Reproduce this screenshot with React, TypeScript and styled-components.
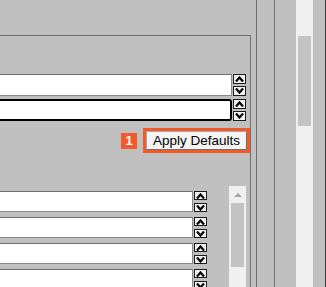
import React from 'react'
import styled, { createGlobalStyle } from 'styled-components'

const GlobalStyle = createGlobalStyle`
  html, body {
    margin: 0;
    padding: 0;
    background: #c0c0c0;
    overflow: hidden;
  }
`

/*
 * STYLES
 */

const Screen = styled.div`
  display: flex;
  width: 326px;
  height: 287px;
  background: #c0c0c0;
  font-family: 'Liberation Sans', Arial, sans-serif;
`

const Main = styled.div`
  width: 251px;
  display: flex;
  flex-direction: column;
`

const Panel = styled.div`
  margin-top: 35px;
  flex: 1;
  border-top: 1px solid #6d6d6d;
  border-right: 1px solid #6d6d6d;
  padding-top: 38px;
  display: flex;
  flex-direction: column;
  min-height: 0;
`

const FieldRow = styled.div<{ $h: number; $mt?: number; $mr?: number }>`
  display: flex;
  height: ${(p) => p.$h}px;
  margin-top: ${(p) => p.$mt ?? 0}px;
  margin-right: ${(p) => p.$mr ?? 0}px;
  gap: 1px;
  flex-shrink: 0;
`

const Field = styled.input<{ $focused?: boolean }>`
  flex: 1;
  min-width: 0;
  box-sizing: border-box;
  background: #fff;
  padding: 0;
  outline: none;
  border-left: none;
  border-top: ${(p) => (p.$focused ? '2px solid #000' : '1px solid #6e6e6e')};
  border-bottom: ${(p) => (p.$focused ? '2px solid #000' : '1px solid #8a8a8a')};
  border-right: ${(p) => (p.$focused ? '2px solid #000' : '1px solid #8a8a8a')};
  border-radius: ${(p) => (p.$focused ? '0 3px 3px 0' : '0')};
`

const Spinner = styled.div`
  width: 13px;
  display: flex;
  flex-direction: column;
  justify-content: space-between;
`

const SpinButton = styled.div<{ $h: number }>`
  box-sizing: border-box;
  height: ${(p) => p.$h}px;
  border: 1px solid #1c1c1c;
  background: #f2f2f2;
  display: flex;
  align-items: center;
  justify-content: center;
`

const ActionRow = styled.div`
  display: flex;
  justify-content: flex-end;
  align-items: center;
  gap: 9px;
  margin-top: 10px;
  margin-right: 3px;
`

const Badge = styled.div`
  width: 16px;
  height: 16px;
  background: #f15a29;
  color: #fff;
  font-size: 13px;
  font-weight: 700;
  display: flex;
  align-items: center;
  justify-content: center;
`

const ActionButton = styled.button`
  box-sizing: border-box;
  width: 101px;
  height: 19px;
  padding: 0 0 1px;
  font-family: 'Liberation Sans', Arial, sans-serif;
  font-size: 13.5px;
  color: #000;
  background: #f4f4f4;
  border: 1px solid #a8a8a8;
  border-right-color: #707070;
  border-bottom-color: #707070;
  outline: 3px solid #f15a29;
  outline-offset: 0;
  white-space: nowrap;
`

const ListArea = styled.div`
  margin-top: 36px;
  flex: 1;
  display: flex;
  padding-right: 4px;
  min-height: 0;
`

const ListRows = styled.div`
  width: 207px;
  padding-top: 5px;
  display: flex;
  flex-direction: column;
  gap: 5px;
`

const ListScroll = styled.div`
  margin-left: auto;
  width: 17px;
  background: #f0f0f0;
  display: flex;
  flex-direction: column;
  align-items: center;
  padding-top: 7px;
  box-sizing: border-box;
`

const ScrollThumb = styled.div<{ $w: number; $h: number; $mt: number }>`
  width: ${(p) => p.$w}px;
  height: ${(p) => p.$h}px;
  margin-top: ${(p) => p.$mt}px;
  background: #c3c3c3;
`

const Gap = styled.div<{ $w: number }>`
  width: ${(p) => p.$w}px;
  flex-shrink: 0;
`

const VLine = styled.div<{ $c?: string }>`
  width: 1px;
  flex-shrink: 0;
  background: ${(p) => p.$c ?? '#6d6d6d'};
`

const Track = styled.div`
  width: 17px;
  flex-shrink: 0;
  background: #f0f0f0;
  display: flex;
  justify-content: center;
`

/*
 * COMPONENTS
 */

const Chevron = ({ up }: { up?: boolean }) => (
  <svg width="9" height="6" viewBox="0 0 9 6">
    <polyline
      points={up ? '1,5.5 4.5,1.5 8,5.5' : '1,0.5 4.5,4.5 8,0.5'}
      fill="none"
      stroke="#000"
      strokeWidth="2.2"
    />
  </svg>
)

const SpinField = ({
  h,
  btn,
  mt,
  mr,
  focused
}: {
  h: number
  btn: number
  mt?: number
  mr?: number
  focused?: boolean
}) => (
  <FieldRow $h={h} $mt={mt} $mr={mr}>
    <Field $focused={focused} readOnly />
    <Spinner>
      <SpinButton $h={btn}>
        <Chevron up />
      </SpinButton>
      <SpinButton $h={btn}>
        <Chevron />
      </SpinButton>
    </Spinner>
  </FieldRow>
)

const App = () => {
  return (
    <>
      <GlobalStyle />
      <Screen>
        <Main>
          <Panel>
            <SpinField h={22} btn={10} mr={4} />
            <SpinField h={22} btn={10} mt={3} mr={4} focused />
            <ActionRow>
              <Badge>1</Badge>
              <ActionButton>Apply Defaults</ActionButton>
            </ActionRow>
            <ListArea>
              <ListRows>
                {[0, 1, 2, 3].map((i) => (
                  <SpinField key={i} h={21} btn={9} />
                ))}
              </ListRows>
              <ListScroll>
                <svg width="8" height="5" viewBox="0 0 8 5">
                  <polygon points="0,4 4,0 8,4" fill="#a3a3a3" />
                </svg>
                <ScrollThumb $w={13} $h={64} $mt={5} />
              </ListScroll>
            </ListArea>
          </Panel>
        </Main>
        <Gap $w={5} />
        <VLine />
        <Gap $w={17} />
        <VLine />
        <Gap $w={21} />
        <Track>
          <ScrollThumb $w={13} $h={90} $mt={36} />
        </Track>
        <Gap $w={12} />
        <VLine $c="#3a3a3a" />
      </Screen>
    </>
  )
}

export default App
